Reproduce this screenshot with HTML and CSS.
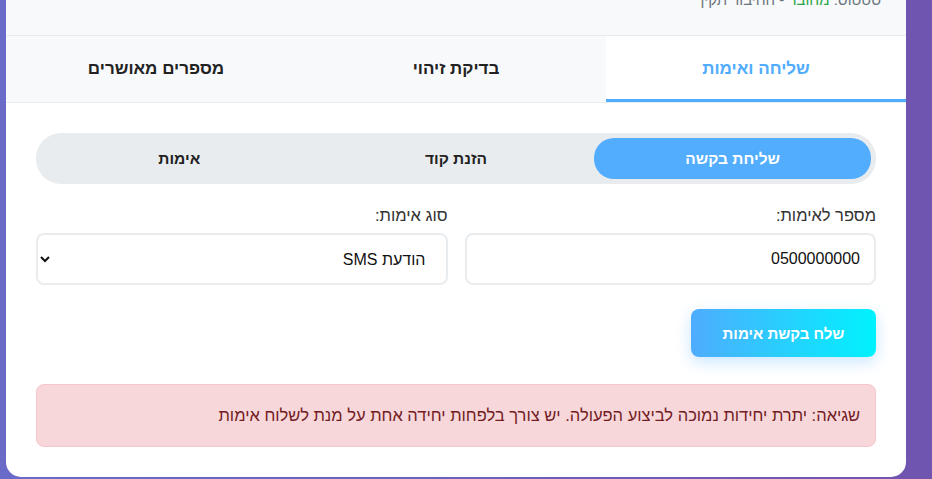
FILE: index.html
```html
<!DOCTYPE html>
<html lang="he" dir="rtl">
<head>
<meta charset="utf-8">
<link rel="stylesheet" href="styles.css">
</head>
<body>
<div class="card">
  <div class="status">סטטוס: <span class="ok">מחובר</span> - החיבור תקין</div>
  <div class="tabs">
    <div class="tab active">שליחה ואימות</div>
    <div class="tab">בדיקת זיהוי</div>
    <div class="tab">מספרים מאושרים</div>
  </div>
  <div class="content">
    <div class="steps">
      <div class="step active">שליחת בקשה</div>
      <div class="step">הזנת קוד</div>
      <div class="step">אימות</div>
    </div>
    <div class="form-row">
      <div class="field">
        <label class="label">מספר לאימות:</label>
        <input class="input" type="text" value="0500000000">
      </div>
      <div class="field">
        <label class="label">סוג אימות:</label>
        <select class="input select">
          <option>הודעת SMS</option>
        </select>
      </div>
    </div>
    <div class="actions">
      <button class="btn">שלח בקשת אימות</button>
    </div>
    <div class="error">שגיאה: יתרת יחידות נמוכה לביצוע הפעולה. יש צורך בלפחות יחידה אחת על מנת לשלוח אימות</div>
  </div>
</div>
</body>
</html>
```

FILE: styles.css
```css
html, body {
  margin: 0;
  padding: 0;
}
body {
  background: linear-gradient(90deg, #6a6ac9 0%, #7055b0 100%);
  min-height: 100vh;
  font-family: "Liberation Sans", Arial, sans-serif;
  color: #333;
  overflow: hidden;
}
.card {
  width: 900px;
  margin: -22px 0 0 6px;
  margin-right: 26px;
  background: #fff;
  border-radius: 15px;
  overflow: hidden;
}
.status {
  background: #f8f9fa;
  padding: 12px 25px 25px;
  font-size: 15px;
  line-height: 20px;
  color: #6c757d;
  border-bottom: 1px solid #e9ecef;
}
.ok {
  color: #28a745;
}
.tabs {
  display: flex;
  background: #f8f9fa;
  border-bottom: 1px solid #e9ecef;
}
.tab {
  flex: 1;
  height: 60px;
  padding-top: 3px;
  line-height: 60px;
  text-align: center;
  font-size: 17px;
  font-weight: 700;
  color: #222;
  border-bottom: 3px solid transparent;
}
.tab.active {
  background: #fff;
  color: #4facfe;
  border-bottom-color: #4facfe;
}
.content {
  padding: 30px 30px 30px;
}
.steps {
  display: flex;
  background: #e9ecef;
  border-radius: 25px;
  padding: 5px;
}
.step {
  flex: 1;
  height: 41px;
  line-height: 41px;
  text-align: center;
  font-size: 15.5px;
  font-weight: 700;
  color: #222;
  border-radius: 20px;
}
.step.active {
  background: #52adfe;
  color: #fff;
}
.form-row {
  display: grid;
  grid-template-columns: 1fr 1fr;
  gap: 17px;
  margin-top: 22px;
}
.field {
  display: flex;
  flex-direction: column;
}
.label {
  font-size: 16.5px;
  line-height: 18px;
  color: #333;
  margin-bottom: 9px;
}
.input {
  box-sizing: border-box;
  height: 52px;
  border: 2px solid #e9ecef;
  border-radius: 8px;
  padding: 0 14px;
  font-family: "Liberation Sans", Arial, sans-serif;
  font-size: 16px;
  color: #111;
  background: #fff;
  direction: rtl;
  outline: none;
}
.select {
  padding-right: 16px;
}
.actions {
  display: flex;
  margin-top: 24px;
}
.btn {
  width: 185px;
  height: 48px;
  border: none;
  border-radius: 8px;
  background: linear-gradient(90deg, #4facfe 0%, #00f2fe 100%);
  color: #fff;
  font-family: "Liberation Sans", Arial, sans-serif;
  font-size: 15px;
  font-weight: 700;
  box-shadow: 0 5px 15px rgba(79, 172, 254, 0.3);
  cursor: pointer;
}
.error {
  margin-top: 27px;
  background: #f8d7da;
  border: 1px solid #f5c6cb;
  border-radius: 8px;
  color: #721c24;
  font-size: 16.5px;
  line-height: 21px;
  padding: 20px 15px;
}
```
